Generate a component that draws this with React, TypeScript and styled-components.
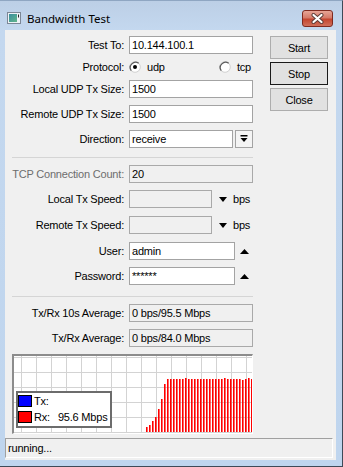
import React from "react";
import styled, { createGlobalStyle } from "styled-components";

const GlobalStyle = createGlobalStyle`
  html, body {
    margin: 0;
    padding: 0;
    background: #ffffff;
  }
  body {
    font-family: "Liberation Sans", Arial, sans-serif;
    font-size: 11px;
    letter-spacing: -0.2px;
    color: #000;
  }
`;

const Frame = styled.div`
  width: 343px;
  height: 467px;
  box-sizing: border-box;
  display: flex;
  flex-direction: column;
  padding: 0 6px 6px 5px;
  background: linear-gradient(#bccfe6 0px, #c4d8ef 30px, #bfd5ee 100%);
  border-top: 1px solid #8fa6c2;
  border-right: 1px solid #3e4a58;
  border-bottom: 1px solid #3e4a58;
`;

const TitleBar = styled.div`
  height: 29px;
  box-sizing: border-box;
  padding: 5px 3px 0 2px;
  display: flex;
  align-items: center;
  gap: 6px;
`;

const TitleText = styled.div`
  flex: 1;
  font-family: "Noto Sans", "Liberation Sans", sans-serif;
  font-size: 11.5px;
  letter-spacing: 0;
  color: #000;
`;

const CloseButton = styled.div`
  width: 31px;
  height: 17px;
  box-sizing: border-box;
  border: 1px solid #7f2a20;
  border-radius: 3px;
  background: linear-gradient(#e7a597 0%, #d57a69 45%, #c4452f 55%, #d0705c 100%);
  display: flex;
  align-items: center;
  justify-content: center;
`;

const Client = styled.div`
  flex: 1;
  background: #f0f0f0;
  display: flex;
  flex-direction: column;
`;

const Main = styled.div`
  display: flex;
  padding: 6px 0 0 7px;
`;

const Form = styled.div`
  width: 241px;
  display: flex;
  flex-direction: column;
  gap: 7px;
`;

const Row = styled.div<{ $h?: number }>`
  height: ${(p) => p.$h ?? 18}px;
  display: flex;
  align-items: flex-start;
  gap: 5px;
`;

const Label = styled.div<{ $disabled?: boolean; $lh?: number }>`
  width: 112px;
  flex: none;
  text-align: right;
  white-space: nowrap;
  line-height: ${(p) => p.$lh ?? 18}px;
  color: ${(p) => (p.$disabled ? "#6d6d6d" : "#000")};
`;

const Field = styled.div<{ $h?: number }>`
  width: 124px;
  height: ${(p) => p.$h ?? 18}px;
  display: flex;
  align-items: center;
`;

const TextBox = styled.div<{ $w?: number; $readonly?: boolean }>`
  box-sizing: border-box;
  width: ${(p) => p.$w ?? 124}px;
  height: 18px;
  flex: none;
  padding: 0 2px;
  line-height: 16px;
  white-space: nowrap;
  overflow: hidden;
  border: 1px solid ${(p) => (p.$readonly ? "#a9a9a9" : "#a3a3a3")};
  background: ${(p) => (p.$readonly ? "#f0f0f0" : "#ffffff")};
`;

const DropButton = styled.div`
  box-sizing: border-box;
  width: 18px;
  height: 18px;
  margin-left: 2px;
  border: 1px solid #a3a3a3;
  background: #f4f4f4;
  display: flex;
  align-items: center;
  justify-content: center;
`;

const Arrow = styled.svg<{ $ml: number }>`
  margin-left: ${(p) => p.$ml}px;
  flex: none;
`;

const Unit = styled.span`
  margin-left: 6px;
`;

const RadioGroup = styled.div`
  width: 124px;
  height: 12px;
  padding-right: 2px;
  box-sizing: border-box;
  display: flex;
  align-items: center;
  justify-content: space-between;
`;

const RadioOption = styled.div`
  display: flex;
  align-items: center;
  gap: 6px;
  line-height: 12px;
`;

const RadioMark = styled.svg`
  flex: none;
  display: block;
`;

const Separator = styled.div<{ $top: number }>`
  height: 1px;
  margin-top: ${(p) => p.$top}px;
  background: #d5d5d5;
`;

const ButtonColumn = styled.div`
  width: 58px;
  margin-left: 17px;
  display: flex;
  flex-direction: column;
  gap: 3px;
`;

const Button = styled.div<{ $focused?: boolean }>`
  height: 23px;
  box-sizing: border-box;
  border: 1px solid ${(p) => (p.$focused ? "#1a1a1a" : "#adadad")};
  background: #e1e1e1;
  display: flex;
  align-items: center;
  justify-content: center;
`;

const Chart = styled.div`
  position: relative;
  width: 241px;
  height: 80px;
  box-sizing: border-box;
  margin: 7px 0 0 7px;
  border-top: 2px solid #8c8c8c;
  border-left: 2px solid #8c8c8c;
  border-right: 1px solid #ffffff;
  border-bottom: 1px solid #ffffff;
  background: #ffffff;
`;

const Legend = styled.div`
  position: absolute;
  left: 2px;
  top: 35px;
  width: 96px;
  height: 37px;
  box-sizing: border-box;
  border: 2px solid #6c6c6c;
  background: #ffffff;
  padding: 2px 0 0 0;
  display: flex;
  flex-direction: column;
  gap: 4px;
`;

const LegendRow = styled.div`
  display: flex;
  align-items: center;
  gap: 2px;
  line-height: 12px;
`;

const Swatch = styled.span<{ $color: string }>`
  width: 14px;
  height: 12px;
  box-sizing: border-box;
  border: 1px solid #000;
  background: ${(p) => p.$color};
`;

const LegendValue = styled.span`
  margin-left: 6px;
`;

const StatusBar = styled.div`
  height: 20px;
  box-sizing: border-box;
  margin: 4px 3px 0 0;
  padding-left: 2px;
  line-height: 18px;
  border-top: 1px solid #a0a0a0;
  border-left: 1px solid #a0a0a0;
  border-right: 1px solid #ffffff;
  border-bottom: 1px solid #ffffff;
`;

const bars = [
  5, 7, 11, 15, 23, 33, 48, 53, 53, 53, 53, 53, 53, 54, 53, 53, 53, 53, 53, 53, 53, 53, 53,
  53, 53, 53, 54, 53, 53, 53, 53, 53, 52, 53, 54, 53,
];

const WindowIcon = () => (
  <svg width="14" height="12" viewBox="0 0 14 12">
    <defs>
      <linearGradient id="wi" x1="0" y1="0" x2="1" y2="1">
        <stop offset="0" stopColor="#3a8fa0" />
        <stop offset="1" stopColor="#62b58a" />
      </linearGradient>
    </defs>
    <rect x="0.5" y="0.5" width="13" height="11" fill="#eef2f6" stroke="#7c8796" />
    <rect x="2" y="2" width="8" height="8" fill="url(#wi)" />
    <rect x="11" y="2.5" width="1" height="3" fill="#222" />
  </svg>
);

const CloseGlyph = () => (
  <svg width="13" height="11" viewBox="0 0 13 11">
    <path d="M2.5 2 L10.5 9 M10.5 2 L2.5 9" stroke="#5a3a36" strokeWidth="4" strokeLinecap="round" />
    <path d="M2.5 2 L10.5 9 M10.5 2 L2.5 9" stroke="#ffffff" strokeWidth="2.2" strokeLinecap="round" />
  </svg>
);

const Radio = ({ checked }: { checked?: boolean }) => (
  <RadioMark width="12" height="12" viewBox="0 0 12 12">
    <circle cx="6" cy="6" r="5.3" fill="#ffffff" stroke="#d0d0d0" strokeWidth="1" />
    <path d="M2.3 9.7 A5.3 5.3 0 0 1 9.7 2.3" fill="none" stroke="#5e5e5e" strokeWidth="1.3" />
    {checked && <circle cx="6" cy="6" r="2" fill="#000" />}
  </RadioMark>
);

const DownArrow = ({ ml }: { ml: number }) => (
  <Arrow $ml={ml} width="8" height="5" viewBox="0 0 8 5">
    <polygon points="0,0 8,0 4,5" fill="#000" />
  </Arrow>
);

const UpArrow = ({ ml }: { ml: number }) => (
  <Arrow $ml={ml} width="9" height="5" viewBox="0 0 9 5">
    <polygon points="0,5 9,5 4.5,0" fill="#000" />
  </Arrow>
);

const DropGlyph = () => (
  <svg width="8" height="8" viewBox="0 0 8 8">
    <rect x="0.5" y="0" width="7" height="1.5" fill="#000" />
    <polygon points="0.5,3 7.5,3 4,7" fill="#000" />
  </svg>
);

const Graph = () => (
  <svg width="238" height="77" viewBox="0 0 238 77" style={{ display: "block" }}>
    {Array.from({ length: 16 }, (_, i) => (
      <line key={`v${i}`} x1={7.5 + i * 15} y1={0} x2={7.5 + i * 15} y2={77} stroke="#d3d3d3" />
    ))}
    {Array.from({ length: 6 }, (_, i) => (
      <line key={`h${i}`} x1={0} y1={1.5 + i * 15} x2={238} y2={1.5 + i * 15} stroke="#d3d3d3" />
    ))}
    {bars.map((h, i) => (
      <rect key={`b${i}`} x={132 + i * 3} y={76 - h} width={1.6} height={h} fill="#ff0000" />
    ))}
  </svg>
);

export default function App() {
  return (
    <>
      <GlobalStyle />
      <Frame>
        <TitleBar>
          <WindowIcon />
          <TitleText>Bandwidth Test</TitleText>
          <CloseButton>
            <CloseGlyph />
          </CloseButton>
        </TitleBar>
        <Client>
          <Main>
            <Form>
              <Row>
                <Label>Test To:</Label>
                <TextBox>10.144.100.1</TextBox>
              </Row>
              <Row $h={12}>
                <Label $lh={12}>Protocol:</Label>
                <RadioGroup>
                  <RadioOption>
                    <Radio checked />
                    <span>udp</span>
                  </RadioOption>
                  <RadioOption>
                    <Radio />
                    <span>tcp</span>
                  </RadioOption>
                </RadioGroup>
              </Row>
              <Row>
                <Label>Local UDP Tx Size:</Label>
                <TextBox>1500</TextBox>
              </Row>
              <Row>
                <Label>Remote UDP Tx Size:</Label>
                <TextBox>1500</TextBox>
              </Row>
              <Row>
                <Label>Direction:</Label>
                <Field>
                  <TextBox $w={104}>receive</TextBox>
                  <DropButton>
                    <DropGlyph />
                  </DropButton>
                </Field>
              </Row>
              <Separator $top={2} />
              <Row>
                <Label $disabled>TCP Connection Count:</Label>
                <TextBox $readonly>20</TextBox>
              </Row>
              <Row $h={19}>
                <Label>Local Tx Speed:</Label>
                <Field>
                  <TextBox $w={83} $readonly />
                  <DownArrow ml={7} />
                  <Unit>bps</Unit>
                </Field>
              </Row>
              <Row $h={19}>
                <Label>Remote Tx Speed:</Label>
                <Field>
                  <TextBox $w={83} $readonly />
                  <DownArrow ml={7} />
                  <Unit>bps</Unit>
                </Field>
              </Row>
              <Row>
                <Label>User:</Label>
                <Field>
                  <TextBox $w={106}>admin</TextBox>
                  <UpArrow ml={5} />
                </Field>
              </Row>
              <Row>
                <Label>Password:</Label>
                <Field>
                  <TextBox $w={106}>******</TextBox>
                  <UpArrow ml={5} />
                </Field>
              </Row>
              <Separator $top={4} />
              <Row>
                <Label>Tx/Rx 10s Average:</Label>
                <TextBox $readonly>0 bps/95.5 Mbps</TextBox>
              </Row>
              <Row>
                <Label>Tx/Rx Average:</Label>
                <TextBox $readonly>0 bps/84.0 Mbps</TextBox>
              </Row>
            </Form>
            <ButtonColumn>
              <Button>Start</Button>
              <Button $focused>Stop</Button>
              <Button>Close</Button>
            </ButtonColumn>
          </Main>
          <Chart>
            <Graph />
            <Legend>
              <LegendRow>
                <Swatch $color="#0000ff" />
                <span>Tx:</span>
              </LegendRow>
              <LegendRow>
                <Swatch $color="#ff0000" />
                <span>Rx:</span>
                <LegendValue>95.6 Mbps</LegendValue>
              </LegendRow>
            </Legend>
          </Chart>
          <StatusBar>running...</StatusBar>
        </Client>
      </Frame>
    </>
  );
}
